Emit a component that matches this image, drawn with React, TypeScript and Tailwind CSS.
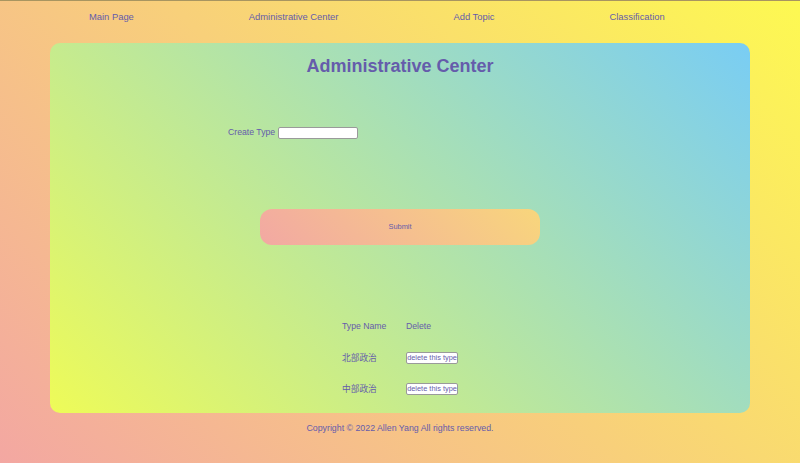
import React from "react";

const navItems = ["Main Page", "Administrative Center", "Add Topic", "Classification"];
const types = ["北部政治", "中部政治"];

export default function App() {
  return (
    <div
      className="flex h-[463px] w-[800px] flex-col overflow-hidden border-t border-[#a89560] bg-[linear-gradient(45deg,#f3a7a2,#fdf952)] text-[#655cab]"
      style={{ fontFamily: '"Liberation Sans", Arial, "Noto Sans CJK SC", sans-serif' }}
    >
      <nav className="flex h-[31px] items-center gap-[115px] pl-[89px] text-[9.4px]">
        {navItems.map((item) => (
          <a key={item} href="#" className="leading-none">
            {item}
          </a>
        ))}
      </nav>

      <main className="mx-[50px] mt-[11px] flex h-[370px] flex-col rounded-[10px] bg-[linear-gradient(45deg,#eefb58,#79cdf4)]">
        <h1 className="flex h-[46px] items-center justify-center text-[18px] font-bold">
          Administrative Center
        </h1>

        <div className="mt-[38px] flex h-[12px] items-center gap-[2px] pl-[178px] text-[8.7px]">
          <label>Create Type</label>
          <input
            type="text"
            className="ml-[1px] h-[12px] w-[80px] rounded-[2px] border border-[#9a9a9a] bg-white"
          />
        </div>

        <button className="mx-auto mt-[70px] flex h-[36px] w-[280px] items-center justify-center rounded-[12px] bg-[linear-gradient(45deg,#f2a8a3,#f8d67c)] text-[7.4px]">
          Submit
        </button>

        <div className="mx-auto mt-[66px] grid grid-cols-[64px_52px] auto-rows-[31px] items-center text-[8.7px]">
          <span>Type Name</span>
          <span>Delete</span>
          {types.map((t) => (
            <React.Fragment key={t}>
              <span style={{ fontFamily: '"Noto Sans CJK SC", sans-serif' }}>{t}</span>
              <button className="flex h-[12px] w-[52px] items-center justify-center rounded-[2px] border border-[#9a9a9a] bg-white text-[7.4px] leading-none whitespace-nowrap">
                delete this type
              </button>
            </React.Fragment>
          ))}
        </div>
      </main>

      <footer className="flex h-[32px] items-center justify-center text-[8.8px]">
        Copyright © 2022 Allen Yang All rights reserved.
      </footer>
    </div>
  );
}
